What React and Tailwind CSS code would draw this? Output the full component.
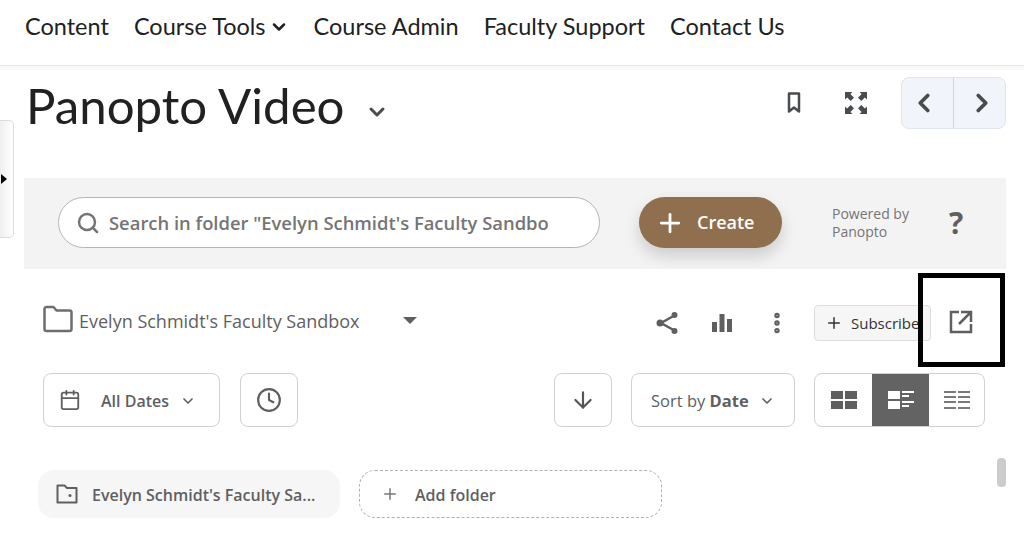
import React from 'react';
import {
  ChevronDown, ChevronLeft, ChevronRight, Search, Plus, EllipsisVertical,
  Calendar, Clock, ArrowDown,
} from 'lucide-react';

const lato = "font-['Lato',sans-serif]";

const NavItem = ({ children }) => (
  <a className="text-[23.500px] leading-none text-[#202122] whitespace-nowrap">{children}</a>
);

const BookmarkIcon = () => (
  <svg width="14" height="22" viewBox="0 0 14 22" fill="none" stroke="#494c4e" strokeWidth="2.500" strokeLinejoin="round">
    <path d="M2 1.500h10v18l-5-4-5 4z" />
  </svg>
);

const FullscreenIcon = () => (
  <svg width="24" height="24" viewBox="0 0 24 24" fill="#494c4e">
    <path d="M1 1h7.500L6.400 3.100 10 6.700 6.700 10 3.100 6.400 1 8.500zM23 1v7.500l-2.100-2.100L17.300 10 14 6.700l3.600-3.600L15.500 1zM1 23v-7.500l2.100 2.100L6.700 14 10 17.300l-3.600 3.600L8.500 23zM23 23h-7.500l2.100-2.100-3.600-3.600 3.300-3.300 3.600 3.600 2.100-2.100z" />
  </svg>
);

const FolderIcon = () => (
  <svg width="30" height="28" viewBox="0 0 30 28" fill="none" stroke="#6e6e6e" strokeWidth="2.500" strokeLinejoin="round">
    <path d="M1.500 4a2 2 0 0 1 2-2h7l3 3.500h13a2 2 0 0 1 2 2V24a2 2 0 0 1-2 2h-23a2 2 0 0 1-2-2z" />
  </svg>
);

const ShareIcon = () => (
  <svg width="26" height="26" viewBox="0 0 26 26" fill="#5f5f5f" stroke="#5f5f5f">
    <path d="M19.500 5.500 6 13l13.500 7.500" fill="none" strokeWidth="2.500" />
    <circle cx="19.500" cy="5" r="3" stroke="none" />
    <circle cx="5" cy="13" r="3.500" stroke="none" />
    <circle cx="19.500" cy="21" r="3" stroke="none" />
  </svg>
);

const BarsIcon = () => (
  <svg width="22" height="22" viewBox="0 0 22 22" fill="#5f5f5f">
    <rect x="1" y="10" width="5" height="10" />
    <rect x="8.500" y="2" width="5" height="18" />
    <rect x="16" y="7" width="5" height="13" />
  </svg>
);

const ExternalIcon = () => (
  <svg width="26" height="26" viewBox="0 0 26 26" fill="none" stroke="#5f5f5f" strokeWidth="2.500">
    <path d="M11 3H3v20h20v-8" />
    <path d="M13 3h10v10M23 3 11 15" />
  </svg>
);

const FolderDotIcon = () => (
  <svg width="24" height="24" viewBox="0 0 24 24" fill="none" stroke="#5f5f5f" strokeWidth="2" strokeLinejoin="round">
    <path d="M2.500 3.500h7l2.500 2.500h9.500v14.500h-19z" />
    <circle cx="15" cy="13.500" r="1.500" fill="#5f5f5f" stroke="none" />
  </svg>
);

const GridView = () => (
  <svg width="26" height="18" viewBox="0 0 26 18" fill="#5f5f5f">
    <rect x="0" y="0" width="12" height="8" />
    <rect x="14" y="0" width="12" height="8" />
    <rect x="0" y="10" width="12" height="8" />
    <rect x="14" y="10" width="12" height="8" />
  </svg>
);

const DetailView = () => (
  <svg width="26" height="18" viewBox="0 0 26 18" fill="#fff">
    <rect x="0" y="0" width="12" height="8" />
    <rect x="0" y="10" width="12" height="8" />
    <rect x="14" y="0" width="12" height="2" />
    <rect x="14" y="4" width="7" height="2" />
    <rect x="14" y="10" width="12" height="2" />
    <rect x="14" y="14" width="7" height="2" />
  </svg>
);

const ListView = () => (
  <svg width="26" height="18" viewBox="0 0 26 18" fill="#7a7a7a">
    <rect x="0" y="0" width="12" height="2" />
    <rect x="14" y="0" width="12" height="2" />
    <rect x="0" y="5" width="12" height="2" />
    <rect x="14" y="5" width="12" height="2" />
    <rect x="0" y="10" width="12" height="2" />
    <rect x="14" y="10" width="12" height="2" />
    <rect x="0" y="16" width="12" height="2" />
    <rect x="14" y="16" width="12" height="2" />
  </svg>
);

const App = () => {
  return (
    <div className="relative h-[547px] w-[1024px] overflow-hidden bg-white font-['Open_Sans',sans-serif]">
      <nav className={`flex h-[66px] items-center gap-[25px] border-b border-[#e6e6e6] pl-[25px] pb-[12px] ${lato}`}>
        <NavItem>Content</NavItem>
        <NavItem>
          <span className="flex items-center gap-[3px]">
            Course Tools <ChevronDown className="h-[20px] w-[20px] text-[#202122]" strokeWidth={3} />
          </span>
        </NavItem>
        <NavItem>Course Admin</NavItem>
        <NavItem>Faculty Support</NavItem>
        <NavItem>Contact Us</NavItem>
      </nav>
      <div className="h-[4px] bg-[#f9f9f9]" />

      <div className="flex h-[108px] items-start justify-between pl-[26px] pr-[18px]">
        <div className="flex items-center">
          <h1 className={`text-[49.200px] leading-[70px] font-normal text-[#202122] ${lato}`}>Panopto Video</h1>
          <ChevronDown className="ml-[20px] mt-[14px] h-[24px] w-[24px] text-[#494c4e]" strokeWidth={3} />
        </div>
        <div className="flex items-center pt-[7px]">
          <span className="mr-[43px]"><BookmarkIcon /></span>
          <span className="mr-[33px]"><FullscreenIcon /></span>
          <div className="flex h-[52px] w-[105px] rounded-[8px] border border-[#dfe5ef] bg-[#f1f5fb]">
            <button className="flex w-[52px] items-center justify-center border-r border-[#cdd5e0] pr-[7px]">
              <ChevronLeft className="h-[30px] w-[30px] text-[#494c4e]" strokeWidth={3} />
            </button>
            <button className="flex flex-1 items-center justify-center pl-[4px]">
              <ChevronRight className="h-[30px] w-[30px] text-[#494c4e]" strokeWidth={3} />
            </button>
          </div>
        </div>
      </div>

      <div className="ml-[24px] mr-[18px] flex h-[91px] items-center bg-[#f3f3f3] pb-[2px] pl-[34px]">
        <div className="flex h-[51px] w-[542px] items-center rounded-full border border-[#b5b5b5] bg-white pl-[17px]">
          <Search className="h-[24px] w-[24px] shrink-0 text-[#757575]" strokeWidth={2.500} />
          <span className="ml-[9px] w-[439px] overflow-hidden whitespace-nowrap text-[18.400px] font-semibold text-[#757575]">
            Search in folder "Evelyn Schmidt's Faculty Sandbox"
          </span>
        </div>
        <button className="ml-[39px] flex h-[51px] w-[143px] items-center rounded-full bg-[#8f6f4e] pl-[16px] text-white shadow-[0_8px_16px_rgba(0,0,0,0.16)]">
          <Plus className="h-[30px] w-[30px]" strokeWidth={2.200} />
          <span className="ml-[12px] text-[18px] font-semibold">Create</span>
        </button>
        <div className="ml-[50px] text-[14px] leading-[18px] text-[#757575]">
          Powered by<br />Panopto
        </div>
        <span className="ml-[40px] text-[30px] font-bold leading-none text-[#5f5f5f]">?</span>
      </div>

      <div className="flex h-[104px] items-start pl-[43px] pt-[36px]">
        <FolderIcon />
        <span className="ml-[6px] mt-[2px] text-[18px] leading-[28px] text-[#5f5f5f]">Evelyn Schmidt's Faculty Sandbox</span>
        <span className="ml-[43px] mt-[12px] h-0 w-0 border-x-[7px] border-t-[7px] border-x-transparent border-t-[#5f5f5f]" />
        <div className="ml-auto flex items-center pr-[93px]">
          <ShareIcon />
          <span className="ml-[30px]"><BarsIcon /></span>
          <EllipsisVertical className="ml-[31px] h-[26px] w-[26px] text-[#5f5f5f]" strokeWidth={3} />
          <div className="ml-[24px] flex h-[36px] w-[117px] items-center rounded-[4px] border border-[#dddddd] bg-[#f6f6f6] pl-[10px] text-[15px] text-[#333]">
            <Plus className="h-[18px] w-[18px]" strokeWidth={2} />
            <span className="ml-[8px] whitespace-nowrap">Subscribe</span>
          </div>
        </div>
      </div>

      <div className="flex h-[54px] items-stretch pl-[43px] pr-[39px]">
        <div className="flex w-[177px] items-center rounded-[8px] border border-[#d0d0d0] pl-[15px] text-[#5f5f5f]">
          <Calendar className="h-[22px] w-[22px]" strokeWidth={2} />
          <span className="ml-[20px] mt-[2px] text-[16px] font-semibold">All Dates</span>
          <ChevronDown className="ml-[11px] mt-[2px] h-[16px] w-[16px]" strokeWidth={2.500} />
        </div>
        <div className="ml-[20px] flex w-[58px] items-center justify-center rounded-[8px] border border-[#d0d0d0]">
          <Clock className="h-[26px] w-[26px] text-[#5f5f5f]" strokeWidth={2} />
        </div>
        <div className="ml-auto flex w-[58px] items-center justify-center rounded-[8px] border border-[#d0d0d0]">
          <ArrowDown className="h-[26px] w-[26px] text-[#555]" strokeWidth={2} />
        </div>
        <div className="ml-[19px] flex w-[164px] items-center rounded-[8px] border border-[#d0d0d0] pl-[19px] pt-[2px] text-[16.500px] font-medium text-[#5f5f5f]">
          <span>Sort by <b className="font-bold">Date</b></span>
          <ChevronDown className="ml-[10px] h-[16px] w-[16px]" strokeWidth={2.500} />
        </div>
        <div className="ml-[19px] flex w-[171px] overflow-hidden rounded-[8px] border border-[#d0d0d0]">
          <div className="flex w-[57px] items-center justify-center"><GridView /></div>
          <div className="flex w-[57px] items-center justify-center bg-[#636363]"><DetailView /></div>
          <div className="flex flex-1 items-center justify-center"><ListView /></div>
        </div>
      </div>

      <div className="mt-[43px] flex items-stretch pl-[38px]">
        <div className="flex h-[48px] w-[302px] items-center rounded-[16px] bg-[#f6f6f6] pl-[17px] text-[16px] font-semibold text-[#5f5f5f]">
          <FolderDotIcon />
          <span className="ml-[13px] mt-[2px]">Evelyn Schmidt's Faculty Sa...</span>
        </div>
        <div className="ml-[19px] flex h-[48px] w-[303px] items-center rounded-[16px] border border-dashed border-[#b0b0b0] pl-[21px] text-[16px] font-semibold text-[#5f5f5f]">
          <Plus className="h-[18px] w-[18px] text-[#777]" strokeWidth={2} />
          <span className="ml-[16px] mt-[2px]">Add folder</span>
        </div>
      </div>

      {/* collapsed side panel tab */}
      <div className="absolute left-0 top-[120px] flex h-[118px] w-[14px] items-center rounded-r-[5px] border border-l-0 border-[#dcdcdc] bg-gradient-to-r from-[#efefef] to-white">
        <span className="ml-[1px] h-0 w-0 border-y-[5px] border-l-[6px] border-y-transparent border-l-black" />
      </div>

      {/* scrollbar thumb */}
      <div className="absolute left-[997px] top-[458px] h-[29px] w-[9px] rounded-[4px] bg-[#cccccc]" />

      {/* annotation box over the open-in-new-tab icon */}
      <div className="absolute left-[918px] top-[273px] flex h-[94px] w-[87px] items-center justify-center border-[5px] border-black">
        <span className="mt-[4px] mr-[2px]"><ExternalIcon /></span>
      </div>
    </div>
  );
};

export default App;
